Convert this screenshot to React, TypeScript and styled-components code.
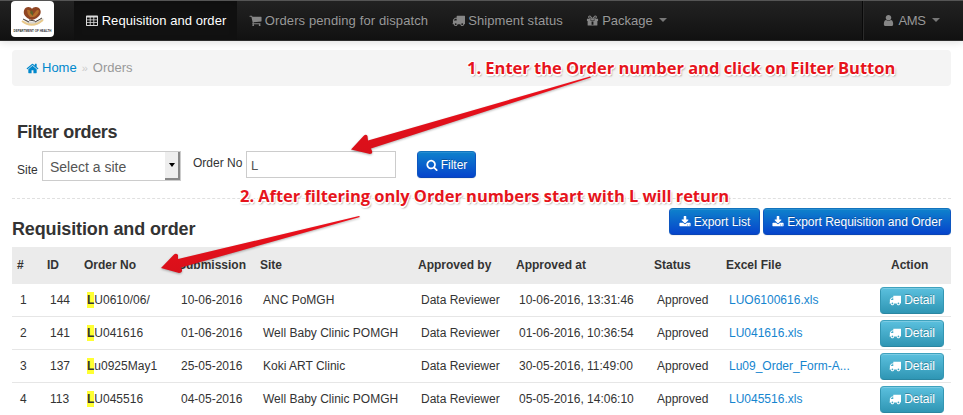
import React from "react";
import styled, { createGlobalStyle, css } from "styled-components";

const GlobalStyle = createGlobalStyle`
  *, *::before, *::after { box-sizing: border-box; }
  html, body { margin: 0; height: 100%; overflow: hidden; background: #fff; }
  body { font-family: "Liberation Sans", Arial, sans-serif; font-size: 13px; line-height: 18px; color: #333; }
`;

/* ---------- icons ---------- */

const paths = {
  cart: "M704 1536q0 52-38 90t-90 38-90-38-38-90 38-90 90-38 90 38 38 90zm896 0q0 52-38 90t-90 38-90-38-38-90 38-90 90-38 90 38 38 90zm128-1088v512q0 24-16.5 42.5t-40.5 21.5l-1044 122q13 60 13 70 0 16-24 64h920q26 0 45 19t19 45-19 45-45 19h-1024q-26 0-45-19t-19-45q0-11 8-31.5t16-36 21.5-40 15.5-29.5l-177-823h-204q-26 0-45-19t-19-45 19-45 45-19h256q16 0 28.5 6.5t19.5 15.5 13 24.5 8 26 5.5 29.5 4.5 26h1201q26 0 45 19t19 45z",
  truck: "M640 1408q0-52-38-90t-90-38-90 38-38 90 38 90 90 38 90-38 38-90zm-384-512h384v-256h-158q-13 0-22 9l-195 195q-9 9-9 22v30zm1280 512q0-52-38-90t-90-38-90 38-38 90 38 90 90 38 90-38 38-90zm256-1088v1024q0 15-4 26.5t-13.5 18.5-16.5 11.5-23.5 6-22.5 2-25.5 0-22.5-.5q0 106-75 181t-181 75-181-75-75-181h-384q0 106-75 181t-181 75-181-75-75-181h-64q-3 0-22.5.5t-25.5 0-22.5-2-23.5-6-16.5-11.5-13.5-18.5-4-26.5q0-26 19-45t45-19v-320q0-8-.5-35t0-38 2.5-34.5 6.5-37 14-30.5 22.5-30l198-198q19-19 50.5-32t58.5-13h160v-192q0-26 19-45t45-19h1024q26 0 45 19t19 45z",
  home: "M1472 992v480q0 26-19 45t-45 19h-384v-384h-256v384h-384q-26 0-45-19t-19-45v-480q0-1 .5-3t.5-3l575-474 575 474q1 2 1 6zm223-69l-62 74q-8 9-21 11h-3q-13 0-21-7l-692-577-692 577q-12 8-24 7-13-2-21-11l-62-74q-8-10-7-23.5t11-21.5l719-599q32-26 76-26t76 26l244 204v-195q0-14 9-23t23-9h192q14 0 23 9t9 23v408l219 182q10 8 11 21.5t-7 23.5z",
  search: "M1216 832q0-185-131.5-316.5t-316.5-131.5-316.5 131.5-131.5 316.5 131.5 316.5 316.5 131.5 316.5-131.5 131.5-316.5zm512 832q0 52-38 90t-90 38q-54 0-90-38l-343-342q-179 124-399 124-143 0-273.5-55.5t-225-150-150-225-55.5-273.5 55.5-273.5 150-225 225-150 273.5-55.5 273.5 55.5 225 150 150 225 55.5 273.5q0 220-124 399l343 343q37 37 37 90z",
  download: "M1344 1344q0-26-19-45t-45-19-45 19-19 45 19 45 45 19 45-19 19-45zm256 0q0-26-19-45t-45-19-45 19-19 45 19 45 45 19 45-19 19-45zm128-224v320q0 40-28 68t-68 28h-1472q-40 0-68-28t-28-68v-320q0-40 28-68t68-28h465l135 136q58 56 136 56t136-56l136-136h464q40 0 68 28t28 68zm-325-569q17 41-14 70l-448 448q-18 19-45 19t-45-19l-448-448q-31-29-14-70 17-39 59-39h256v-448q0-26 19-45t45-19h256q26 0 45 19t19 45v448h256q42 0 59 39z",
  user: "M1536 1399q0 109-62.5 187t-150.5 78h-854q-88 0-150.5-78t-62.5-187q0-85 8.5-160.5t31.5-152 58.5-131 94-89 134.5-34.5q131 128 313 128t313-128q76 0 134.5 34.5t94 89 58.5 131 31.5 152 8.5 160.5zm-256-887q0 159-112.5 271.5t-271.5 112.5-271.5-112.5-112.5-271.5 112.5-271.5 271.5-112.5 271.5 112.5 112.5 271.5z",
  table: "M224 192h1344q96 0 96 96v1152q0 96-96 96h-1344q-96 0-96-96v-1152q0-96 96-96zM256 448v256h352v-256zM720 448v256h352v-256zM1184 448v256h352v-256zM256 800v256h352v-256zM720 800v256h352v-256zM1184 800v256h352v-256zM256 1152v256h352v-256zM720 1152v256h352v-256zM1184 1152v256h352v-256z",
  gift: "M128 640h512v320h512v-320h512v320h-96v576q0 64-64 64h-1216q-64 0-64-64v-576h-96zM704 640h384v256h-384zM768 1024v448h256v-448zM500 192q130 0 240 170l156 182 156-182q110-170 240-170 210 20 210 220 0 190-210 210h-792q-210-20-210-210 0-200 210-220zM510 330q-90 10-90 90t90 90h170l-90-120q-30-60-80-60zM1282 330q90 10 90 90t-90 90h-170l90-120q30-60 80-60z",
};

const IconSvg = styled.svg<{ $size: number }>`
  width: ${(p) => p.$size}px;
  height: ${(p) => p.$size}px;
  fill: currentColor;
  flex: none;
`;

const Icon = ({ name, size = 13 }: { name: keyof typeof paths; size?: number }) => (
  <IconSvg $size={size} viewBox="0 0 1792 1792" aria-hidden="true">
    <path fillRule="evenodd" d={paths[name]} />
  </IconSvg>
);

const Text = styled.span<{ $track?: number }>`
  letter-spacing: ${(p) => p.$track ?? 0}px;
  white-space: nowrap;
`;

/* ---------- navigation ---------- */

const Navbar = styled.nav`
  display: flex;
  height: 41px;
  padding-left: 11px;
  background: linear-gradient(#222, #111);
  border-top: 1px solid #555;
  border-bottom: 1px solid #2d2d2d;
  box-shadow: 0 1px 8px rgba(0, 0, 0, 0.14);
`;

const Logo = styled.div`
  width: 43px;
  height: 36px;
  margin-right: 20px;
  border-radius: 4px;
  background: #fff;
`;

const NavItem = styled.a<{ $active?: boolean; $width: number; $gap?: number }>`
  display: flex;
  align-items: center;
  justify-content: center;
  gap: ${(p) => p.$gap ?? 4}px;
  width: ${(p) => p.$width}px;
  color: #999;
  text-shadow: 0 -1px 0 rgba(0, 0, 0, 0.25);
  ${(p) =>
    p.$active &&
    css`
      color: #fff;
      background: #111;
      box-shadow: inset 0 3px 8px rgba(0, 0, 0, 0.125);
    `}
  svg { opacity: 0.85; }
`;

const Caret = styled.i`
  margin: 0 0 1px 3px;
  border: 4px solid transparent;
  border-top-color: #777;
  border-bottom-width: 0;
`;

const Account = styled.div`
  display: flex;
  width: 101px;
  margin-left: auto;
  border-left: 1px solid #090909;
  box-shadow: inset 1px 0 #2b2b2b;
`;

/* ---------- breadcrumb ---------- */

const Content = styled.main`
  padding: 9px 12px 0;
`;

const Breadcrumb = styled.div`
  display: flex;
  align-items: center;
  height: 36px;
  padding-left: 14px;
  border-radius: 4px;
  background: #f4f4f4;
  color: #999;
`;

const HomeLink = styled.a`
  display: flex;
  align-items: center;
  gap: 3px;
  color: #08c;
`;

const Divider = styled.span`
  margin: 0 5px 0 5px;
  color: #ccc;
  font-size: 11px;
`;

/* ---------- filter ---------- */

const FilterSection = styled.section`
  height: 113px;
  padding: 35px 0 0 5px;
  border-bottom: 1px dashed #e0e0e0;
`;

const Heading = styled.h2<{ $track?: number }>`
  margin: 0;
  font-size: 18px;
  line-height: 22px;
  font-weight: bold;
  letter-spacing: ${(p) => p.$track ?? 0}px;
  white-space: nowrap;
`;

const FilterRow = styled.form`
  display: flex;
  align-items: flex-start;
  padding-top: 8px;
`;

const Label = styled.label<{ $top: number; $width: number }>`
  width: ${(p) => p.$width}px;
  padding-top: ${(p) => p.$top}px;
  font-size: 12px;
  white-space: nowrap;
`;

const SelectBox = styled.div`
  display: flex;
  width: 139px;
  height: 30px;
  margin-right: 12px;
  border: 1px solid #ccc;
  font-size: 14px;
  line-height: 31px;
  color: #555;
  padding-left: 7px;
`;

const SelectArrow = styled.span`
  display: flex;
  align-items: center;
  justify-content: center;
  width: 15px;
  margin-left: auto;
  background: #eee;
  border-right: 2px solid #888;
  border-bottom: 2px solid #888;
  &::after {
    content: "";
    border: 3px solid transparent;
    border-top: 4px solid #000;
    border-bottom: 0;
  }
`;

const Input = styled.div`
  width: 150px;
  height: 27px;
  margin-right: 21px;
  padding-left: 4px;
  border: 1px solid #ccc;
  line-height: 27px;
  color: #555;
`;

const Button = styled.button<{ $tone?: "info"; $width: number }>`
  display: flex;
  align-items: center;
  justify-content: center;
  gap: 3px;
  width: ${(p) => p.$width}px;
  height: 27px;
  padding: 0;
  border: 1px solid;
  border-radius: 4px;
  font: inherit;
  font-size: 12px;
  color: #fff;
  text-shadow: 0 -1px 0 rgba(0, 0, 0, 0.25);
  ${(p) =>
    p.$tone === "info"
      ? css`
          background: linear-gradient(#5bc0de, #2f96b4);
          border-color: #3ea2be #3396b3 #2a86a1;
          box-shadow: inset 0 1px 0 rgba(255, 255, 255, 0.2);
          padding-bottom: 2px;
        `
      : css`
          background: linear-gradient(#0e82cc, #0644cc);
          border-color: #1273bd #0d56c0 #0a45b5;
          box-shadow: inset 0 1px 0 rgba(255, 255, 255, 0.1), 0 1px 1px rgba(0, 0, 0, 0.06);
        `}
`;

/* ---------- orders table ---------- */

const TitleBar = styled.header`
  display: flex;
  height: 48px;
  padding-top: 9px;
  gap: 3px;
  ${Heading} { margin: 10px auto 0 0; }
`;

const Table = styled.table`
  width: 939px;
  table-layout: fixed;
  border-collapse: separate;
  border-spacing: 0;
  font-size: 12px;
  th, td { padding: 0; text-align: left; white-space: nowrap; }
  th { height: 37px; padding: 0 0 2px 5px; background: #ebebeb; }
  td { height: 33px; padding: 0 0 1px 8px; border-bottom: 1px solid #e6e6e6; }
  th:last-child { padding-left: 16px; }
  td:last-child { padding: 1px 0 0 5px; }
`;

const Mark = styled.mark`
  display: inline-block;
  height: 16px;
  line-height: 16px;
  background: #ff3;
  color: inherit;
  font-weight: bold;
`;

const FileLink = styled.a`
  color: #1585cf;
`;

/* ---------- annotations ---------- */

const Note = styled.div<{ $x: number; $y: number; $track: number }>`
  position: absolute;
  left: ${(p) => p.$x}px;
  top: ${(p) => p.$y}px;
  font: bold 16.5px/24px "Open Sans", "Noto Sans", sans-serif;
  letter-spacing: ${(p) => p.$track}px;
  white-space: nowrap;
  color: #e6141c;
  text-shadow: -1px -1px #fff, 1px -1px #fff, -1px 1px #fff, 1px 1px #fff, 0 2px #fff, 1px 2px 2px rgba(0, 0, 0, 0.5);
`;

const Arrows = styled.svg`
  position: absolute;
  left: 0;
  top: 0;
  width: 963px;
  height: 415px;
  pointer-events: none;
  filter: drop-shadow(0 1px 1px rgba(0, 0, 0, 0.3));
`;

const columns = [30, 37, 94, 82, 158, 98, 138, 72, 154, 76];
const headers = ["#", "ID", "Order No", "Submission", "Site", "Approved by", "Approved at", "Status", "Excel File", "Action"];
const orders = [
  ["144", "U0610/06/", "10-06-2016", "ANC PoMGH", "10-06-2016, 13:31:46", "LUO6100616.xls"],
  ["141", "U041616", "01-06-2016", "Well Baby Clinic POMGH", "01-06-2016, 10:36:54", "LU041616.xls"],
  ["137", "u0925May1", "25-05-2016", "Koki ART Clinic", "30-05-2016, 11:49:00", "Lu09_Order_Form-A..."],
  ["113", "U045516", "04-05-2016", "Well Baby Clinic POMGH", "05-05-2016, 14:06:10", "LU045516.xls"],
];

const EmblemSvg = styled.svg`
  display: block;
  width: 43px;
  height: 36px;
  overflow: visible;
`;

const Emblem = () => (
  <EmblemSvg viewBox="0 0 43 36">
    <path d="M14 18q8 6 16-1l3 1-5 5q-6 3-12-1l-4-4z" fill="#d9d6d2" />
    <path d="M21 19C14 17 12 13 13 9.500C14.500 5 19.500 5.500 21 8C22.500 5.500 28 5 29.500 9.500C30.500 13 28 17 21 19z" fill="#8f4523" />
    <path d="M16 9q2-1 4 2l2 3 3-4q2-2 3 0-1 4-5 6h-4q-3-3-3-7z" fill="#b5702c" />
    <path d="M20 9l2 2v4l-3-3z" fill="#5f6128" />
    <path d="M12 18l6 3M31 17l-7 4M18 19l6 1" stroke="#4a4038" fill="none" strokeWidth="1" />
    <path d="M11 20q10 8 21-1" stroke="#e8c98a" fill="none" strokeWidth="1.8" />
    <text x="2.500" y="30.500" fontFamily="Liberation Sans" fontWeight="bold" fontSize="3.300" textLength="38" lengthAdjust="spacingAndGlyphs" fill="#333">DEPARTMENT OF HEALTH</text>
  </EmblemSvg>
);

export default function App() {
  return (
    <>
      <GlobalStyle />
      <Navbar>
        <Logo><Emblem /></Logo>
        <NavItem $active $width={163} $gap={3}><Icon name="table" size={14} /><Text $track={0.05}>Requisition and order</Text></NavItem>
        <NavItem $width={203} $gap={3}><Icon name="cart" /><Text $track={0.11}>Orders pending for dispatch</Text></NavItem>
        <NavItem $width={135} $gap={3}><Icon name="truck" /><Text $track={0.1}>Shipment status</Text></NavItem>
        <NavItem $width={103} $gap={3}><Icon name="gift" /><Text>Package</Text><Caret /></NavItem>
        <Account><NavItem $width={96}><Icon name="user" /><Text $track={-0.4}>AMS</Text><Caret /></NavItem></Account>
      </Navbar>
      <Content>
        <Breadcrumb>
          <HomeLink><Icon name="home" /><Text>Home</Text></HomeLink>
          <Divider>»</Divider>
          <Text>Orders</Text>
        </Breadcrumb>
        <FilterSection>
          <Heading $track={-0.38}>Filter orders</Heading>
          <FilterRow>
            <Label $top={10} $width={25}>Site</Label>
            <SelectBox><Text>Select a site</Text><SelectArrow /></SelectBox>
            <Label $top={3} $width={53}>Order No</Label>
            <Input>L</Input>
            <Button type="button" $width={59}><Icon name="search" size={12} /><Text>Filter</Text></Button>
          </FilterRow>
        </FilterSection>
        <TitleBar>
          <Heading $track={-0.13}>Requisition and order</Heading>
          <Button $width={91}><Icon name="download" size={12} /><Text>Export List</Text></Button>
          <Button $width={188}><Icon name="download" size={12} /><Text>Export Requisition and Order</Text></Button>
        </TitleBar>
        <Table>
          <colgroup>{columns.map((w, i) => <col key={i} width={w} />)}</colgroup>
          <thead>
            <tr>{headers.map((h) => <th key={h}>{h}</th>)}</tr>
          </thead>
          <tbody>
            {orders.map(([id, no, date, site, at, file], i) => (
              <tr key={id}>
                <td>{i + 1}</td>
                <td>{id}</td>
                <td><Mark>L</Mark>{no}</td>
                <td>{date}</td>
                <td>{site}</td>
                <td>Data Reviewer</td>
                <td>{at}</td>
                <td>Approved</td>
                <td><FileLink>{file}</FileLink></td>
                <td><Button $tone="info" $width={64}><Icon name="truck" size={12} /><Text>Detail</Text></Button></td>
              </tr>
            ))}
          </tbody>
        </Table>
      </Content>
      <Arrows viewBox="0 0 963 415">
        <defs>
          <linearGradient id="red" x1="0" y1="0" x2="0.15" y2="1">
            <stop offset="0" stopColor="#f0101c" />
            <stop offset="1" stopColor="#d8101a" />
          </linearGradient>
        </defs>
        <path d="M590 76.5L368 140.5 367.5 136Q366 133.500 363.500 136L351 149.500 370 154Q373 154 372 151L371 148.500 591 77.500z" fill="url(#red)" />
        <path d="M359 216L178 259 178 255Q176 252.500 173.500 255L161 268 179 273Q182.500 273 182 269.500L181 267.500 360 217z" fill="url(#red)" />
      </Arrows>
      <Note $x={467} $y={56} $track={-0.02}>1. Enter the Order number and click on Filter Button</Note>
      <Note $x={240} $y={184} $track={-0.05}>2. After filtering only Order numbers start with L will return</Note>
    </>
  );
}
